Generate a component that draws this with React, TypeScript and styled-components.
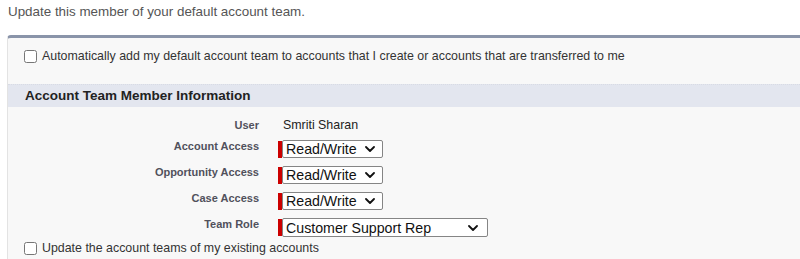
import React from "react";
import styled, { createGlobalStyle } from "styled-components";

const Global = createGlobalStyle`
  html, body { margin: 0; padding: 0; background: #ffffff; }
  body { font-family: "Liberation Sans", Arial, sans-serif; color: #333; }
`;

const Page = styled.div`
  width: 800px;
  height: 259px;
  overflow: hidden;
`;

const Intro = styled.div`
  height: 24px;
  line-height: 24px;
  padding-left: 8px;
  font-size: 13.4px;
  color: #555;
`;

const Panel = styled.div`
  margin: 11px 0 0 7px;
  border-top: 3px solid #8a94a9;
  border-left: 1px solid #e3e3e3;
  border-top-left-radius: 4px;
  background: #f8f8f8;
  padding-bottom: 20px;
`;

const CheckRow = styled.label<{ $h: number }>`
  display: flex;
  align-items: center;
  height: ${(p) => p.$h}px;
  padding-left: 15px;
  font-size: 12.4px;
  color: #333;
`;

const Box = styled.input`
  width: 13px;
  height: 13px;
  margin: 1px 5px 0 1px;
  accent-color: #555;
`;

const SectionHead = styled.div`
  margin-top: 10px;
  height: 22px;
  line-height: 22px;
  border-top: 1px dotted #d8dbe4;
  background: #e3e6ef;
  padding-left: 17px;
  font-size: 13.5px;
  font-weight: bold;
  color: #222;
`;

const Fields = styled.div`
  display: grid;
  grid-template-columns: 251px 1fr;
  column-gap: 19px;
  row-gap: 8px;
  padding-top: 12px;
`;

const Label = styled.div`
  text-align: right;
  font-size: 11px;
  line-height: 13px;
  font-weight: bold;
  color: #51515c;
`;

const Value = styled.div`
  font-size: 12.4px;
  line-height: 13px;
  padding-left: 5px;
  color: #222;
`;

const Required = styled.div`
  display: flex;
  align-items: center;
`;

const RedBar = styled.span`
  width: 4px;
  height: 17px;
  background: #c00;
`;

const SelectWrap = styled.div<{ $w: number; $h: number }>`
  position: relative;
  width: ${(p) => p.$w}px;
  height: ${(p) => p.$h}px;
`;

const Select = styled.select`
  appearance: none;
  -webkit-appearance: none;
  box-sizing: border-box;
  width: 100%;
  height: 100%;
  margin: 0;
  padding: 0 0 0 3px;
  border: 1px solid #858585;
  border-radius: 2px;
  background: #fff;
  font-family: "Liberation Sans", Arial, sans-serif;
  font-size: 14.2px;
  color: #111;
  outline: none;
`;

const Chevron = styled.svg<{ $r: number }>`
  position: absolute;
  top: 50%;
  right: ${(p) => p.$r}px;
  transform: translateY(-50%);
  pointer-events: none;
`;

const Arrow = ({ r }: { r: number }) => (
  <Chevron $r={r} width="10" height="6" viewBox="0 0 10 6">
    <path d="M1 1 L5 5 L9 1" fill="none" stroke="#111" strokeWidth="1.8" strokeLinecap="round" strokeLinejoin="round" />
  </Chevron>
);

const Picklist = ({ value, options, w, h = 18, r = 8 }: { value: string; options: string[]; w: number; h?: number; r?: number }) => (
  <Required>
    <RedBar />
    <SelectWrap $w={w} $h={h}>
      <Select defaultValue={value}>
        {options.map((o) => (
          <option key={o}>{o}</option>
        ))}
      </Select>
      <Arrow r={r} />
    </SelectWrap>
  </Required>
);

const access = ["Read Only", "Read/Write"];
const roles = ["Account Manager", "Customer Support Rep", "Executive Sponsor", "Sales Rep"];

export default function App() {
  return (
    <Page>
      <Global />
      <Intro>Update this member of your default account team.</Intro>
      <Panel>
        <CheckRow $h={36}>
          <Box type="checkbox" />
          Automatically add my default account team to accounts that I create or accounts that are transferred to me
        </CheckRow>
        <SectionHead>Account Team Member Information</SectionHead>
        <Fields>
          <Label>User</Label>
          <Value>Smriti Sharan</Value>
          <Label>Account Access</Label>
          <Picklist value="Read/Write" options={access} w={101} />
          <Label>Opportunity Access</Label>
          <Picklist value="Read/Write" options={access} w={101} />
          <Label>Case Access</Label>
          <Picklist value="Read/Write" options={access} w={101} />
          <Label>Team Role</Label>
          <Picklist value="Customer Support Rep" options={roles} w={206} h={19} r={10} />
        </Fields>
        <CheckRow $h={22}>
          <Box type="checkbox" />
          Update the account teams of my existing accounts
        </CheckRow>
      </Panel>
    </Page>
  );
}
